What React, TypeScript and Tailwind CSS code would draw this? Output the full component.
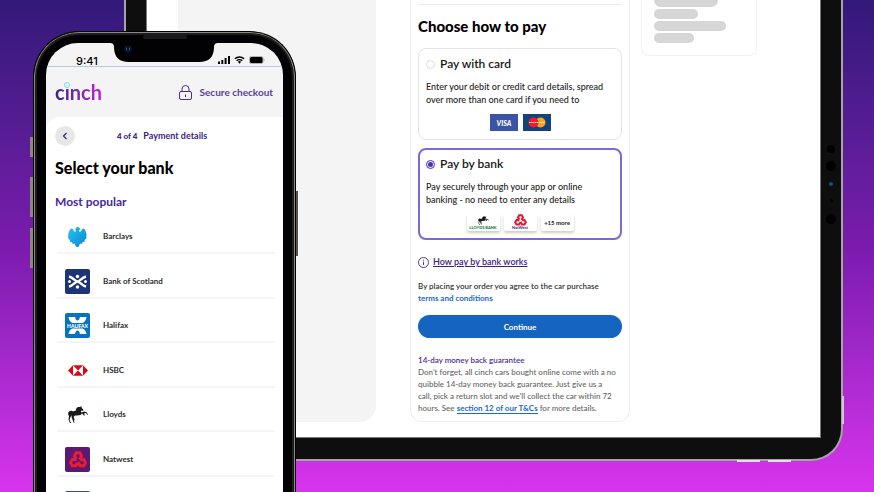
import React from "react";

const font = "font-[Lato,'Open_Sans',sans-serif]";

function Horse({ className }: { className: string }) {
  return (
    <svg viewBox="0 0 40 34" className={className} fill="#1b1b1b" aria-hidden="true">
      <path d="M17 9C17 4 20 1 24 2l3-2 0 3 4 5-1 2-4-1c0 2 0 3 1 4l6-2 5 2 2 5-2-1-2-3-4 1 2 4-2 0-4-4-3 3-7 1-4 0-3 3 2 4-1 5 2 2-3 0-2-6-2-5 1-4-3 4-2 5 2 5 2 2-3 0-3-7 1-7-1-5c0-4 3-6 7-5 4 1 7 0 9-2z" />
      <path d="M6 12C1 9 0 13 1 20c1-4 2-5 5-5zM21 2c-4 1-6 4-5 9l7 1 2-8z" />
    </svg>
  );
}

function Chevrons({ className, stroke }: { className: string; stroke: string }) {
  return (
    <svg viewBox="0 0 40 38" className={className} fill="none" stroke={stroke} strokeWidth="6.400" aria-hidden="true">
      <g transform="translate(20 21)">
        <path d="M-4-4L-8-10L-4-17H4L8-10L3-2" />
        <path d="M-4-4L-8-10L-4-17H4L8-10L3-2" transform="rotate(120)" />
        <path d="M-4-4L-8-10L-4-17H4L8-10L3-2" transform="rotate(240)" />
      </g>
    </svg>
  );
}

function Barclays() {
  return (
    <svg viewBox="0 0 38 40" className="h-5 w-[19px]" aria-hidden="true">
      <defs>
        <linearGradient id="eagle" x1="0" y1="0" x2="1" y2="1">
          <stop offset="0" stopColor="#28c3f2" />
          <stop offset="1" stopColor="#0a86cf" />
        </linearGradient>
      </defs>
      <path fill="url(#eagle)" d="M15 3c1-3 6-4 8-1l2 3-3 1 0 3 4 0 2-5 4-1c5 5 6 14 4 21l-3 2 0 4-4 0-1 4-4-1-2 5-2 2h-3l-2-2-2-5-4 1-1-4-4 0 0-4-3-2C-1 17 1 8 6 3l4 1 2 5 4 0-1-3z" />
    </svg>
  );
}

function BankOfScotland() {
  return (
    <svg viewBox="0 0 50 50" className="size-[25px]" aria-hidden="true">
      <rect width="50" height="50" rx="4" fill="#1d3576" />
      <g stroke="#fff" strokeWidth="5" fill="none">
        <path d="M8 15C17 17 20 25 25 25s8-8 17-10M8 35c9-2 12-10 17-10s8 8 17 10" />
      </g>
      <g fill="#fff">
        <circle cx="25" cy="15" r="3.500" />
        <circle cx="25" cy="36" r="3.500" />
        <circle cx="9" cy="25" r="3" />
        <circle cx="41" cy="25" r="3" />
      </g>
    </svg>
  );
}

function Halifax() {
  return (
    <svg viewBox="0 0 50 50" className="size-[25px]" aria-hidden="true">
      <rect width="50" height="50" rx="4" fill="#0673c1" />
      <path d="M7 8h13c1 5 3 7 5 7s4-2 5-7h13c-1 7-4 10-8 12H15C11 18 8 15 7 8zM15 31h20c4 2 7 5 8 11H30c-1-5-3-7-5-7s-4 2-5 7H7c1-6 4-9 8-11z" fill="#fff" />
      <text x="25" y="29" textAnchor="middle" fontFamily="Lato" fontWeight="900" fontSize="10" fill="#fff">HALIFAX</text>
    </svg>
  );
}

function Hsbc() {
  return (
    <svg viewBox="0 0 40 21" className="h-[11px] w-5" aria-hidden="true">
      <path d="M0 10.500L10 0h20l10 10.500L30 21H10z" fill="#dc0714" />
      <path d="M10 0v21L20 10.500zM30 0v21L20 10.500z" fill="#fff" />
    </svg>
  );
}

function Natwest() {
  return (
    <span className="grid size-[25px] place-items-center rounded-xs bg-[#5a1a74]">
      <Chevrons className="h-[17px] w-[18px]" stroke="#ee1c2e" />
    </span>
  );
}

const banks = [
  { name: "Barclays", logo: <Barclays /> },
  { name: "Bank of Scotland", logo: <BankOfScotland /> },
  { name: "Halifax", logo: <Halifax /> },
  { name: "HSBC", logo: <Hsbc /> },
  { name: "Lloyds", logo: <Horse className="h-[17px] w-5" /> },
  { name: "Natwest", logo: <Natwest /> },
];

function StatusBar() {
  return (
    <div className="relative flex h-6 items-end justify-between border-b border-[#b9c8e6] pr-[18px] pl-[30px]">
      <svg viewBox="0 0 108 20" className="absolute top-0 left-[64px] h-5 w-[108px]" aria-hidden="true">
        <path d="M0 0h108q-4 0-4 4c0 10-5 15-15 15H19C9 19 4 14 4 4q0-4-4-4z" fill="#020204" />
        <circle cx="18" cy="6" r="4" fill="#0a0e1c" />
        <path d="M16.500 4.500v3M19.500 4.500v3" stroke="#1c5fae" strokeWidth="1" />
      </svg>
      <span className="font-[Inter,sans-serif] text-[11px] leading-[10px] font-medium text-black">9:41</span>
      <span className="flex items-center gap-1 pb-[2px]">
        <svg viewBox="0 0 12 8" className="h-2 w-3" aria-hidden="true">
          <path d="M0 5.500h2V8H0zM3.300 4h2v4h-2zM6.600 2h2v6h-2zM10 0h2v8h-2z" />
        </svg>
        <svg viewBox="0 0 12 9" className="h-2 w-[11px]" fill="none" stroke="#000" strokeWidth="1.600" aria-hidden="true">
          <path d="M.8 3.200a7.500 7.500 0 0 1 10.400 0M2.800 5.400a4.600 4.600 0 0 1 6.400 0" />
          <path d="M4.200 6.600a2.600 2.600 0 0 1 3.600 0L6 8.600z" fill="#000" stroke="none" />
        </svg>
        <svg viewBox="0 0 16 8" className="h-2 w-4" aria-hidden="true">
          <rect x=".4" y=".4" width="13.800" height="7.200" rx="2.200" fill="none" stroke="#999" strokeWidth=".8" />
          <rect x="1" y="1" width="12.600" height="6" rx="1.600" />
          <path d="M15 2.600q1 1.400 0 2.800z" fill="#888" />
        </svg>
      </span>
    </div>
  );
}

function Phone() {
  return (
    <div className="absolute top-[31px] left-[33px] w-[263px]">
      <span className="absolute top-[106px] -left-[3px] h-5 w-[3px] bg-[#8d8780]" />
      <span className="absolute top-[146px] -left-[3px] h-10 w-[3px] bg-[#8d8780]" />
      <span className="absolute top-[197px] -left-[3px] h-10 w-[3px] bg-[#8d8780]" />
      <span className="absolute top-[160px] -right-[2px] h-[65px] w-[3px] bg-[#55524e]" />
      <div className="relative rounded-t-[46px] border border-b-0 border-black bg-[#020204] px-3 pt-[11px] shadow-[inset_0_0_0_1px_#8b8986,inset_0_0_0_3px_#1d1c1b]">
        <span className="absolute top-[3px] left-1/2 h-1 w-11 -translate-x-1/2 rounded-full bg-[#1a1a1c]" />
        <div className="overflow-hidden rounded-t-[32px] bg-[#f4f4f4]">
          <StatusBar />
          <header className="flex h-[50px] items-center justify-between pr-[10px] pl-[9px]">
            <div className="relative">
              <span className="block bg-linear-to-r from-[#35237f] to-[#c31fd6] bg-clip-text text-[20px] leading-6 font-bold text-transparent">cinch</span>
              <span className="absolute top-[2px] left-[9px] size-[6px] rounded-full border border-[#74e0f4] bg-[#f4f4f4]" />
            </div>
            <div className="flex items-center gap-2 text-[10px] font-bold text-[#5a3f98]">
              <svg viewBox="0 0 26 30" className="h-[15px] w-[13px]" fill="none" stroke="#4a2d8c" strokeWidth="2" aria-hidden="true">
                <rect x="1" y="13" width="24" height="16" rx="3" />
                <path d="M6 13V8a7 7 0 0 1 14 0v5M13 19v5" />
              </svg>
              Secure checkout
            </div>
          </header>
          <main className="rounded-tl-[14px] bg-white px-[9px] pt-[9px]">
            <div className="flex items-center">
              <button type="button" aria-label="Back" className="grid size-5 place-items-center rounded-full bg-[#e7e7e7]">
                <svg viewBox="0 0 8 10" className="h-2 w-[6px]" fill="none" stroke="#3a2180" strokeWidth="1.600" aria-hidden="true">
                  <path d="M6 1L2 5l4 4" />
                </svg>
              </button>
              <p className="ml-[42px] flex items-baseline gap-[6px] text-[#3d2285]">
                <span className="text-[8px] font-black">4 of 4</span>
                <span className="text-[9px] font-bold">Payment details</span>
              </p>
            </div>
            <h1 className="mt-3 text-[16px] leading-5 font-black text-black">Select your bank</h1>
            <h2 className="mt-4 text-[12px] leading-4 font-bold text-[#45299a]">Most popular</h2>
            <ul className="mr-[-2px] ml-[2px] grid h-[311px] grid-rows-7">
              {banks.map((bank) => (
                <li key={bank.name} className="mr-[1px] flex border-b-2 border-[#f5f5f5]">
                  <button type="button" className="flex flex-1 items-end pb-[3px] pl-2 text-left">
                    <span className="grid size-[25px] place-items-center">{bank.logo}</span>
                    <span className="ml-[13px] text-[8px] leading-[25px] font-bold text-[#2b2b2b]">{bank.name}</span>
                  </button>
                </li>
              ))}
              <li className="flex items-end pb-[5px] pl-2">
                <span className="size-[25px] rounded-xs bg-[#2a5298]" />
              </li>
            </ul>
          </main>
        </div>
      </div>
    </div>
  );
}

const radio =
  "size-[9px] shrink-0 appearance-none rounded-full border border-[#dcdcdc] bg-white checked:border-[#6a4fd0] checked:bg-[#4a2fb0] checked:shadow-[inset_0_0_0_1px_#fff]";

function CheckoutCard() {
  return (
    <section className="w-[220px] rounded-b-xl border border-t-0 border-[#efefef] px-[7px] pt-1 pb-[7px]">
      <hr className="border-[#ececec]" />
      <h2 className="mt-3 text-[15px] leading-[18px] font-black text-black">Choose how to pay</h2>
      <div className="mt-[13px] rounded-lg border border-[#e4e4e4] px-[7px] pt-[7px] pb-2">
        <label className="flex items-center gap-[5px] text-[12px] leading-4 font-semibold text-[#161616]">
          <input type="radio" name="method" className={radio} />
          Pay with card
        </label>
        <p className="mt-2 text-[9px] leading-[13px] font-medium whitespace-nowrap text-[#222]">
          Enter your debit or credit card details, spread
          <br />
          over more than one card if you need to
        </p>
        <div className="mt-2 flex justify-center gap-[5px]">
          <svg viewBox="0 0 28 17" className="h-[17px] w-7" role="img" aria-label="Visa">
            <rect width="28" height="17" fill="#3a55a6" />
            <text x="14" y="11.500" textAnchor="middle" fontFamily="Lato" fontWeight="900" fontStyle="italic" fontSize="7" fill="#fff">VISA</text>
            <path d="M6 6l2 0 1 2z" fill="#f0a830" />
          </svg>
          <svg viewBox="0 0 28 17" className="h-[17px] w-7" role="img" aria-label="Mastercard">
            <rect width="28" height="17" fill="#14437a" />
            <circle cx="17.500" cy="8.500" r="5" fill="#f9a51f" />
            <circle cx="10.500" cy="8.500" r="5" fill="#ee1c2e" />
            <path d="M6 8.500h16" stroke="#fbe3d5" strokeWidth="1" strokeDasharray="1.500 .5" />
          </svg>
        </div>
      </div>
      <div className="mt-2 rounded-lg border-2 border-[#7d68d6] px-[6px] pt-[6px] pb-[7px]">
        <label className="flex items-center gap-[5px] text-[12px] leading-4 font-semibold text-[#161616]">
          <input type="radio" name="method" defaultChecked className={radio} />
          Pay by bank
        </label>
        <p className="mt-2 text-[9px] leading-[13px] font-medium whitespace-nowrap text-[#222]">
          Pay securely through your app or online
          <br />
          banking - no need to enter any details
        </p>
        <div className="mt-2 flex justify-center gap-1">
          <span className="flex h-[17px] w-[33px] flex-col items-center justify-end rounded-xs bg-white pb-[1px] shadow-[0_2px_3px_#0003]">
            <Horse className="h-[9px] w-[11px]" />
            <span className="text-[4px] leading-[5px] font-black text-[#137a4a]">LLOYDS BANK</span>
          </span>
          <span className="flex h-[17px] w-[33px] flex-col items-center justify-end rounded-xs bg-white pb-[1px] shadow-[0_2px_3px_#0003]">
            <Chevrons className="h-3 w-[13px]" stroke="#e8132f" />
            <span className="text-[4px] leading-[4px] font-black text-[#5a287f]">NatWest</span>
          </span>
          <span className="grid h-[17px] w-[33px] place-items-center rounded-xs bg-white text-[6px] font-bold text-[#222] shadow-[0_2px_3px_#0003]">+15 more</span>
        </div>
      </div>
      <p className="mt-4 flex items-center gap-1">
        <svg viewBox="0 0 22 22" className="size-[11px]" fill="none" stroke="#3d2285" strokeWidth="1.800" aria-hidden="true">
          <circle cx="11" cy="11" r="10" />
          <path d="M11 9.500V16M11 5.500v2" />
        </svg>
        <a href="#how" className="text-[9px] leading-3 font-semibold text-[#3d2285] underline underline-offset-1">How pay by bank works</a>
      </p>
      <p className="mt-3 text-[8px] leading-3 font-semibold text-[#333]">
        By placing your order you agree to the car purchase
        <br />
        <a href="#terms" className="font-bold text-[#1b6ac4]">terms and conditions</a>
      </p>
      <button type="button" className="mt-[11px] block h-[23px] w-full rounded-full bg-[#1565c0] text-[8px] font-bold text-white">Continue</button>
      <h3 className="mt-4 text-[8px] leading-3 font-semibold text-[#4a2d9a]">14-day money back guarantee</h3>
      <p className="text-[8px] leading-3 font-medium whitespace-nowrap text-[#666]">
        Don't forget, all cinch cars bought online come with a no
        <br />
        quibble 14-day money back guarantee. Just give us a
        <br />
        call, pick a return slot and we'll collect the car within 72
        <br />
        hours. See <a href="#section-12" className="border-b border-[#1b6ac4] font-bold text-[#1b6ac4]">section 12 of our T&amp;Cs</a> for more details.
      </p>
    </section>
  );
}

function Tablet() {
  return (
    <div className="relative mr-[31px] ml-[124px] rounded-b-[32px] border-x-2 border-b-2 border-[#a8a3a8] bg-[#0e0e0e] px-5 pb-[21px]">
      <span className="absolute top-[396px] -right-[3px] h-7 w-[2px] bg-[#cfcacf]" />
      <span className="absolute right-[81px] -bottom-[3px] h-[2px] w-[23px] bg-[#e6e0e6]" />
      <span className="absolute right-[50px] -bottom-[3px] h-[2px] w-[23px] bg-[#e6e0e6]" />
      <div className="absolute top-[145px] right-0 flex w-5 flex-col items-center">
        <span className="size-2 rounded-full bg-black" />
        <span className="mt-2 size-[10px] rounded-full bg-black" />
        <span className="mt-[11px] size-1 rounded-full bg-[#14507a]" />
        <span className="mt-[13px] size-[3px] rounded-full bg-black" />
        <span className="mt-3 size-[10px] rounded-full bg-black" />
      </div>
      <div className="flex border border-t-0 border-[#777] bg-white pr-[63px] pb-[15px] pl-[31px]">
        <div className="mr-[34px] flex-1 rounded-b-2xl bg-[#f4f4f4]" />
        <CheckoutCard />
        <div className="ml-[11px] flex w-[116px] flex-col items-start gap-[2px] self-start rounded-b-lg border border-t-0 border-[#f0f0f0] pb-3 pl-3">
          <span className="h-[7px] w-16 rounded-b-full bg-[#d6d6d6]" />
          <span className="h-[10px] w-11 rounded-full bg-[#d6d6d6]" />
          <span className="h-[10px] w-[72px] rounded-full bg-[#d6d6d6]" />
          <span className="h-[10px] w-10 rounded-full bg-[#d6d6d6]" />
        </div>
      </div>
    </div>
  );
}

export default function App() {
  return (
    <div className={`relative h-screen overflow-hidden bg-linear-to-b from-[#32197a] via-[#7a1bad] to-[#d934ee] ${font}`}>
      <Tablet />
      <Phone />
    </div>
  );
}
